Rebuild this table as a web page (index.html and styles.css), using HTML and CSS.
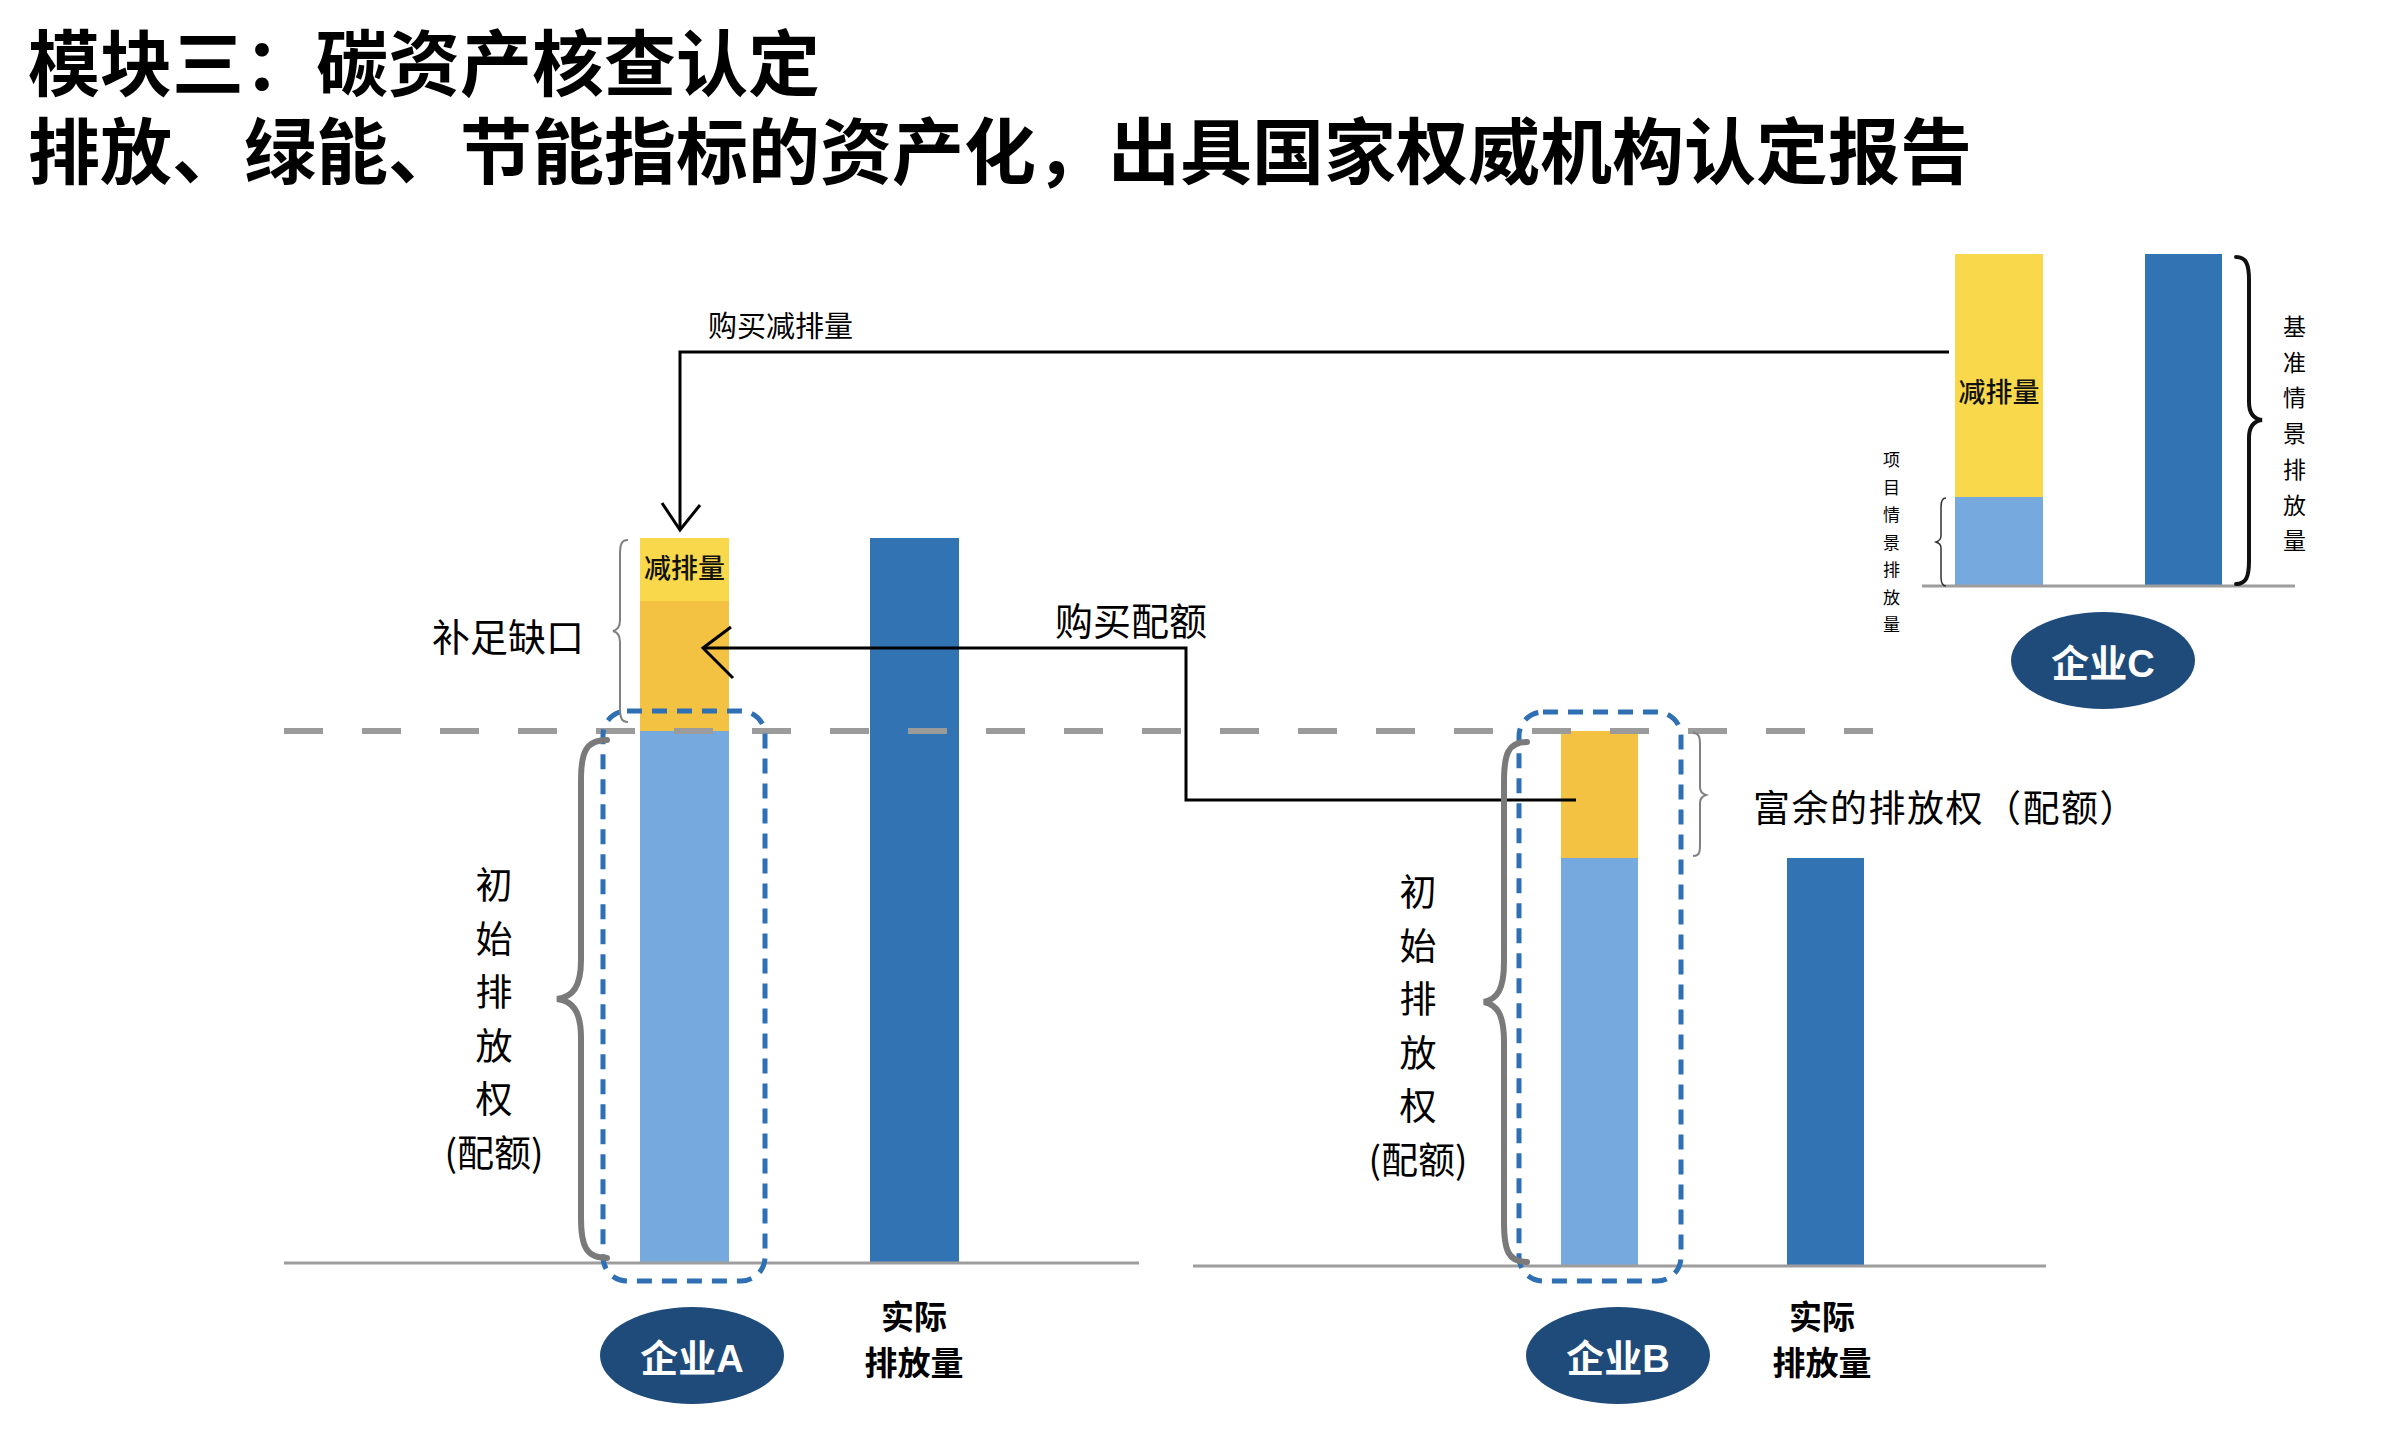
FILE: index.html
```html
<!DOCTYPE html>
<html lang="zh-CN">
<head>
<meta charset="utf-8">
<title>模块三：碳资产核查认定</title>
<link rel="stylesheet" href="styles.css">
</head>
<body>
<main class="stage">
  <header class="title">
    <h1>模块三：碳资产核查认定</h1>
    <h2>排放、绿能、节能指标的资产化，出具国家权威机构认定报告</h2>
  </header>

  <section class="diagram">
    <!-- Enterprise A -->
    <div class="bar stack-a">
      <div class="seg yellow seg-a1">减排量</div>
      <div class="seg orange seg-a2"></div>
      <div class="seg light seg-fill"></div>
    </div>
    <div class="bar dark dark-a"></div>

    <!-- Enterprise B -->
    <div class="bar stack-b">
      <div class="seg orange seg-b1"></div>
      <div class="seg light seg-fill"></div>
    </div>
    <div class="bar dark dark-b"></div>

    <!-- Enterprise C -->
    <div class="bar stack-c">
      <div class="seg yellow seg-c1">减排量</div>
      <div class="seg light seg-fill"></div>
    </div>
    <div class="bar dark dark-c"></div>

    <svg class="lines" width="2398" height="1446" viewBox="0 0 2398 1446" xmlns="http://www.w3.org/2000/svg">
      <!-- threshold dashed line -->
      <line x1="284" y1="731" x2="1873" y2="731" stroke="#9b9b9b" stroke-width="6" stroke-dasharray="39 39"/>
      <!-- baselines -->
      <line x1="284" y1="1263" x2="1139" y2="1263" stroke="#9d9d9d" stroke-width="3"/>
      <line x1="1193" y1="1266" x2="2046" y2="1266" stroke="#9d9d9d" stroke-width="3"/>
      <line x1="1922" y1="586" x2="2295" y2="586" stroke="#9d9d9d" stroke-width="3"/>
      <!-- dashed groups -->
      <rect x="603" y="711" width="162" height="570" rx="24" fill="none" stroke="#2f6fb4" stroke-width="5" stroke-dasharray="15 10"/>
      <rect x="1519" y="712" width="162" height="569" rx="24" fill="none" stroke="#2f6fb4" stroke-width="5" stroke-dasharray="15 10"/>
      <!-- buy reductions connector -->
      <polyline points="1949,352 680,352 680,528" fill="none" stroke="#000" stroke-width="3"/>
      <polyline points="662,503 680,530 700,505" fill="none" stroke="#000" stroke-width="3"/>
      <!-- buy allowances connector -->
      <polyline points="1576,800 1186,800 1186,648 703,648" fill="none" stroke="#000" stroke-width="3"/>
      <polyline points="731,627 703,648 733,678" fill="none" stroke="#000" stroke-width="3"/>
      <!-- braces -->
      <path d="M607 740 C586 740 581 752 581 780 L581 960 C581 988 572 997 557 999 C572 1001 581 1010 581 1038 L581 1218 C581 1246 586 1258 607 1258" fill="none" stroke="#7a7a7a" stroke-width="6" stroke-linecap="round"/>
      <path d="M1527 742 C1508 742 1504 754 1504 782 L1504 962 C1504 990 1497 999 1484 1002 C1497 1005 1504 1014 1504 1042 L1504 1222 C1504 1250 1508 1262 1527 1262" fill="none" stroke="#7a7a7a" stroke-width="6" stroke-linecap="round"/>
      <path d="M628 540 C621 540 620 545 620 555 L620 620 C620 627 617 630 613 631 C617 632 620 635 620 642 L620 707 C620 717 621 722 628 722" fill="none" stroke="#808080" stroke-width="2"/>
      <path d="M1693 733 C1699 733 1700 737 1700 745 L1700 787 C1700 792 1703 794 1706 795 C1703 796 1700 798 1700 803 L1700 845 C1700 853 1699 856 1693 856" fill="none" stroke="#808080" stroke-width="2"/>
      <path d="M1946 498 C1942 498 1941 501 1941 507 L1941 536 C1941 540 1939 541 1936 542 C1939 543 1941 544 1941 548 L1941 577 C1941 583 1942 586 1946 586" fill="none" stroke="#333" stroke-width="1.5"/>
      <path d="M2236 257 C2246 257 2249 264 2249 280 L2249 402 C2249 414 2254 419 2262 420 C2254 421 2249 426 2249 438 L2249 561 C2249 577 2246 584 2236 584" fill="none" stroke="#111" stroke-width="4" stroke-linecap="round"/>
    </svg>

    <!-- labels -->
    <div class="label lbl-buy-reduce">购买减排量</div>
    <div class="label lbl-gap">补足缺口</div>
    <div class="label lbl-buy-quota">购买配额</div>
    <div class="label lbl-surplus">富余的排放权（配额）</div>

    <div class="vlabel vl-a">
      <div class="vchars">初始排放权</div>
      <div class="vparen">(配额)</div>
    </div>
    <div class="vlabel vl-b">
      <div class="vchars">初始排放权</div>
      <div class="vparen">(配额)</div>
    </div>

    <div class="vsmall vs-base">基准情景排放量</div>
    <div class="vsmall vs-proj">项目情景排放量</div>

    <div class="actual act-a">实际<br>排放量</div>
    <div class="actual act-b">实际<br>排放量</div>

    <div class="badge badge-a">企业A</div>
    <div class="badge badge-b">企业B</div>
    <div class="badge badge-c">企业C</div>
  </section>
</main>
</body>
</html>
```

FILE: styles.css
```css
html, body {
  margin: 0;
  padding: 0;
  background: #ffffff;
}

body {
  font-family: "Noto Sans CJK SC", "Noto Sans", sans-serif;
  color: #000;
}

.stage {
  position: relative;
  width: 2398px;
  height: 1446px;
  overflow: hidden;
}

.title {
  padding: 15px 0 0 28px;
}

.title h1,
.title h2 {
  margin: 0;
  font-size: 72px;
  line-height: 88px;
  font-weight: 700;
  letter-spacing: 0;
  white-space: nowrap;
}

.diagram {
  position: absolute;
  inset: 0;
}

/* bars */
.bar {
  position: absolute;
  display: flex;
  flex-direction: column;
}

.seg {
  display: flex;
  align-items: flex-start;
  justify-content: center;
  font-size: 27px;
  line-height: 1;
  font-weight: 500;
  color: #111;
  white-space: nowrap;
  box-sizing: border-box;
}

.seg-fill { flex: 1; }

.yellow { background: #f9d94b; }
.orange { background: #f3c243; }
.light  { background: #76a9de; }
.dark   { background: #3273b3; }

.stack-a { left: 640px; top: 538px; width: 89px; height: 725px; }
.seg-a1  { height: 63px; padding-top: 15px; }
.seg-a2  { height: 130px; }
.dark-a  { left: 870px; top: 538px; width: 89px; height: 725px; }

.stack-b { left: 1561px; top: 731px; width: 77px; height: 535px; }
.seg-b1  { height: 127px; }
.dark-b  { left: 1787px; top: 858px; width: 77px; height: 408px; }

.stack-c { left: 1955px; top: 254px; width: 88px; height: 332px; }
.seg-c1  { height: 243px; padding-top: 123px; }
.dark-c  { left: 2145px; top: 254px; width: 77px; height: 332px; }

.lines {
  position: absolute;
  left: 0;
  top: 0;
}

/* labels */
.label {
  position: absolute;
  white-space: nowrap;
  font-weight: 400;
  color: #000;
}

.lbl-buy-reduce { left: 708px; top: 304px; font-size: 29px; line-height: 40px; }
.lbl-gap        { left: 432px; top: 610px; font-size: 38px; line-height: 50px; }
.lbl-buy-quota  { left: 1055px; top: 594px; font-size: 38px; line-height: 50px; }
.lbl-surplus    { left: 1753px; top: 781px; font-size: 37px; line-height: 50px; letter-spacing: 1.5px; }

.vlabel {
  position: absolute;
  width: 140px;
  display: flex;
  flex-direction: column;
  align-items: center;
  font-size: 37px;
  line-height: 53.5px;
  color: #000;
}

.vchars {
  width: 1em;
  text-align: center;
  word-break: break-all;
}

.vparen { white-space: nowrap; }

.vl-a { left: 424px; top: 857px; }
.vl-b { left: 1348px; top: 864px; }

.vsmall {
  position: absolute;
  width: 1em;
  text-align: center;
  word-break: break-all;
  color: #000;
}

.vs-base { left: 2283px; top: 308px; font-size: 23px; line-height: 35.7px; }
.vs-proj { left: 1883px; top: 445px; font-size: 17px; line-height: 27.5px; }

.actual {
  position: absolute;
  width: 160px;
  text-align: center;
  font-size: 33px;
  line-height: 46px;
  font-weight: 700;
  color: #000;
}

.act-a { left: 834px; top: 1292px; }
.act-b { left: 1742px; top: 1292px; }

.badge {
  position: absolute;
  width: 184px;
  height: 97px;
  border-radius: 50%;
  background: #1f4b7b;
  color: #fff;
  display: flex;
  align-items: center;
  justify-content: center;
  font-family: "Liberation Sans", "Noto Sans CJK SC", sans-serif;
  font-size: 38px;
  font-weight: 700;
}

.badge-a { left: 600px; top: 1307px; }
.badge-b { left: 1526px; top: 1307px; }
.badge-c { left: 2011px; top: 612px; }
```
